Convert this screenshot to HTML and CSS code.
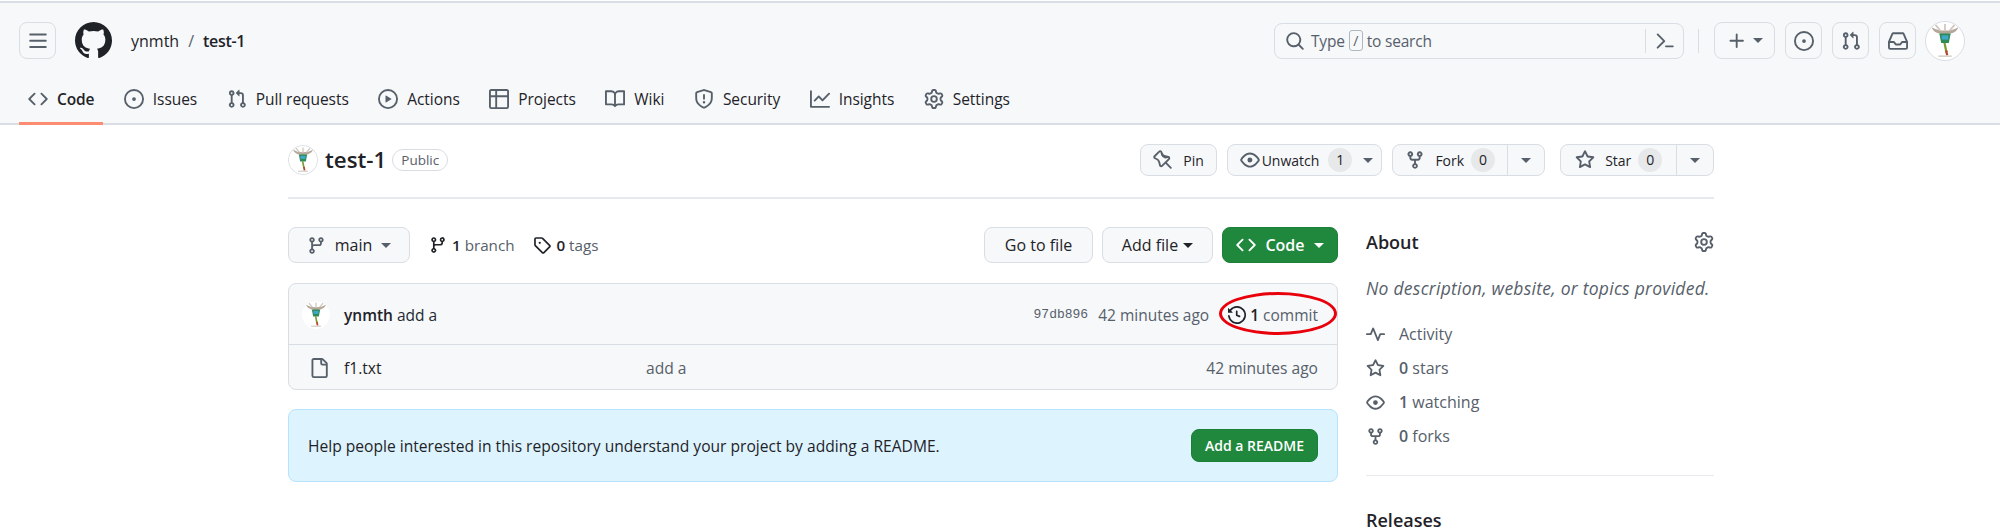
FILE: index.html
```html
<!DOCTYPE html>
<html lang="en">
<head>
<meta charset="utf-8">
<title>ynmth/test-1</title>
<link rel="stylesheet" href="styles.css">
</head>
<body>
<svg class="defs" aria-hidden="true">
<defs>
<symbol id="i-bars" viewBox="0 0 16 16"><path d="M1 2.75A.75.75 0 0 1 1.75 2h12.5a.75.75 0 0 1 0 1.5H1.75A.75.75 0 0 1 1 2.75Zm0 5A.75.75 0 0 1 1.75 7h12.5a.75.75 0 0 1 0 1.5H1.75A.75.75 0 0 1 1 7.75ZM1.75 12h12.5a.75.75 0 0 1 0 1.5H1.75a.75.75 0 0 1 0-1.5Z"/></symbol>
<symbol id="i-mark" viewBox="0 0 16 16"><path d="M8 0c4.42 0 8 3.58 8 8a8.013 8.013 0 0 1-5.45 7.59c-.4.08-.55-.17-.55-.38 0-.27.01-1.13.01-2.2 0-.75-.25-1.23-.54-1.48 1.78-.2 3.65-.88 3.65-3.95 0-.88-.31-1.59-.82-2.15.08-.2.36-1.02-.08-2.12 0 0-.67-.22-2.2.82-.64-.18-1.32-.27-2-.27-.68 0-1.36.09-2 .27-1.53-1.03-2.2-.82-2.2-.82-.44 1.1-.16 1.92-.08 2.12-.51.56-.82 1.28-.82 2.15 0 3.06 1.86 3.75 3.64 3.95-.23.2-.44.55-.51 1.07-.46.21-1.61.55-2.33-.66-.15-.24-.6-.83-1.23-.82-.67.01-.27.38.01.53.34.19.73.9.82 1.13.16.45.68 1.31 2.69.94 0 .67.01 1.3.01 1.49 0 .21-.15.45-.55.38A7.995 7.995 0 0 1 0 8c0-4.42 3.58-8 8-8Z"/></symbol>
<symbol id="i-code" viewBox="0 0 16 16"><path d="m11.28 3.22 4.25 4.25a.75.75 0 0 1 0 1.06l-4.25 4.25a.749.749 0 0 1-1.275-.326.749.749 0 0 1 .215-.734L13.94 8l-3.72-3.72a.749.749 0 0 1 .326-1.275.749.749 0 0 1 .734.215Zm-6.56 0a.751.751 0 0 1 1.042.018.751.751 0 0 1 .018 1.042L2.06 8l3.72 3.72a.749.749 0 0 1-.326 1.275.749.749 0 0 1-.734-.215L.47 8.53a.75.75 0 0 1 0-1.06Z"/></symbol>
<symbol id="i-issue" viewBox="0 0 16 16"><path d="M8 9.5a1.5 1.5 0 1 0 0-3 1.5 1.5 0 0 0 0 3Z"/><path d="M8 0a8 8 0 1 1 0 16A8 8 0 0 1 8 0ZM1.5 8a6.5 6.5 0 1 0 13 0 6.5 6.5 0 0 0-13 0Z"/></symbol>
<symbol id="i-pr" viewBox="0 0 16 16"><path d="M1.5 3.25a2.25 2.25 0 1 1 3 2.122v5.256a2.251 2.251 0 1 1-1.5 0V5.372A2.25 2.25 0 0 1 1.5 3.25Zm5.677-.177L9.573.677A.25.25 0 0 1 10 .854V2.5h1A2.5 2.5 0 0 1 13.5 5v5.628a2.251 2.251 0 1 1-1.5 0V5a1 1 0 0 0-1-1h-1v1.646a.25.25 0 0 1-.427.177L7.177 3.427a.25.25 0 0 1 0-.354ZM3.75 2.5a.75.75 0 1 0 0 1.5.75.75 0 0 0 0-1.5Zm0 9.5a.75.75 0 1 0 0 1.5.75.75 0 0 0 0-1.5Zm8.25.75a.75.75 0 1 0 1.5 0 .75.75 0 0 0-1.5 0Z"/></symbol>
<symbol id="i-play" viewBox="0 0 16 16"><path d="M8 0a8 8 0 1 1 0 16A8 8 0 0 1 8 0ZM1.5 8a6.5 6.5 0 1 0 13 0 6.5 6.5 0 0 0-13 0Zm4.879-2.773 4.264 2.559a.25.25 0 0 1 0 .428l-4.264 2.559A.25.25 0 0 1 6 10.559V5.442a.25.25 0 0 1 .379-.215Z"/></symbol>
<symbol id="i-table" viewBox="0 0 16 16"><path d="M0 1.75C0 .784.784 0 1.75 0h12.5C15.216 0 16 .784 16 1.75v12.5A1.75 1.75 0 0 1 14.25 16H1.75A1.75 1.75 0 0 1 0 14.25ZM6.5 6.5v8h7.75a.25.25 0 0 0 .25-.25V6.5Zm8-1.5V1.75a.25.25 0 0 0-.25-.25H6.5V5Zm-13 1.5v7.75c0 .138.112.25.25.25H5v-8ZM5 5V1.5H1.75a.25.25 0 0 0-.25.25V5Z"/></symbol>
<symbol id="i-book" viewBox="0 0 16 16"><path d="M0 1.75A.75.75 0 0 1 .75 1h4.253c1.227 0 2.317.59 3 1.501A3.743 3.743 0 0 1 11.006 1h4.245a.75.75 0 0 1 .75.75v10.5a.75.75 0 0 1-.75.75h-4.507a2.25 2.25 0 0 0-1.591.659l-.622.621a.75.75 0 0 1-1.06 0l-.622-.621A2.25 2.25 0 0 0 5.258 13H.75a.75.75 0 0 1-.75-.75Zm7.251 10.324.004-5.073-.002-2.253A2.25 2.25 0 0 0 5.003 2.5H1.5v9h3.757a3.75 3.75 0 0 1 1.994.574ZM8.755 4.75l-.004 7.322a3.752 3.752 0 0 1 1.992-.572H14.5v-9h-3.495a2.25 2.25 0 0 0-2.25 2.25Z"/></symbol>
<symbol id="i-shield" viewBox="0 0 16 16"><path d="M7.467.133a1.748 1.748 0 0 1 1.066 0l5.25 1.68A1.75 1.75 0 0 1 15 3.48V7c0 1.566-.32 3.182-1.303 4.682-.983 1.498-2.585 2.813-5.032 3.855a1.697 1.697 0 0 1-1.33 0c-2.447-1.042-4.049-2.357-5.032-3.855C1.32 10.182 1 8.566 1 7V3.48a1.75 1.75 0 0 1 1.217-1.667Zm.61 1.429a.25.25 0 0 0-.153 0l-5.25 1.68a.25.25 0 0 0-.174.238V7c0 1.358.275 2.666 1.057 3.86.784 1.194 2.121 2.34 4.366 3.297a.196.196 0 0 0 .154 0c2.245-.956 3.582-2.104 4.366-3.298C13.225 9.666 13.5 8.36 13.5 7V3.48a.251.251 0 0 0-.174-.237l-5.25-1.68ZM8.75 4.75v3a.75.75 0 0 1-1.5 0v-3a.75.75 0 0 1 1.5 0ZM9 10.5a1 1 0 1 1-2 0 1 1 0 0 1 2 0Z"/></symbol>
<symbol id="i-graph" viewBox="0 0 16 16"><path d="M1.5 1.75V13.5h13.75a.75.75 0 0 1 0 1.5H.75a.75.75 0 0 1-.75-.75V1.75a.75.75 0 0 1 1.5 0Zm14.28 2.53-5.25 5.25a.75.75 0 0 1-1.06 0L7 7.06 4.28 9.78a.751.751 0 0 1-1.042-.018.751.751 0 0 1-.018-1.042l3.25-3.25a.75.75 0 0 1 1.06 0L10 7.94l4.72-4.72a.751.751 0 0 1 1.042.018.751.751 0 0 1 .018 1.042Z"/></symbol>
<symbol id="i-gear" viewBox="0 0 16 16"><path d="M8 0a8.2 8.2 0 0 1 .701.031C9.444.095 9.99.645 10.16 1.29l.288 1.107c.018.066.079.158.212.224.231.114.454.243.668.386.123.082.233.09.299.071l1.103-.303c.644-.176 1.392.021 1.82.63.27.385.506.792.704 1.218.315.675.111 1.422-.364 1.891l-.814.806c-.049.048-.098.147-.088.294.016.257.016.515 0 .772-.01.147.038.246.088.294l.814.806c.475.469.679 1.216.364 1.891a7.977 7.977 0 0 1-.704 1.217c-.428.61-1.176.807-1.82.63l-1.102-.302c-.067-.019-.177-.011-.3.071a5.909 5.909 0 0 1-.668.386c-.133.066-.194.158-.211.224l-.29 1.106c-.168.646-.715 1.196-1.458 1.26a8.006 8.006 0 0 1-1.402 0c-.743-.064-1.289-.614-1.458-1.26l-.289-1.106c-.018-.066-.079-.158-.212-.224a5.738 5.738 0 0 1-.668-.386c-.123-.082-.233-.09-.299-.071l-1.103.303c-.644.176-1.392-.021-1.82-.63a8.12 8.12 0 0 1-.704-1.218c-.315-.675-.111-1.422.363-1.891l.815-.806c.05-.048.098-.147.088-.294a6.214 6.214 0 0 1 0-.772c.01-.147-.038-.246-.088-.294l-.815-.806C.635 6.045.431 5.298.746 4.623a7.92 7.92 0 0 1 .704-1.217c.428-.61 1.176-.807 1.82-.63l1.102.302c.067.019.177.011.3-.071.214-.143.437-.272.668-.386.133-.066.194-.158.211-.224l.29-1.106C6.009.645 6.556.095 7.299.03 7.53.01 7.764 0 8 0Zm-.571 1.525c-.036.003-.108.036-.137.146l-.289 1.105c-.147.561-.549.967-.998 1.189-.173.086-.34.183-.5.29-.417.278-.97.423-1.529.27l-1.103-.303c-.109-.03-.175.016-.195.045-.22.312-.412.644-.573.99-.014.031-.021.11.059.19l.815.806c.411.406.562.957.53 1.456a4.709 4.709 0 0 0 0 .582c.032.499-.119 1.05-.53 1.456l-.815.806c-.081.08-.073.159-.059.19.162.346.353.677.573.989.02.03.085.076.195.046l1.102-.303c.56-.153 1.113-.008 1.53.27.161.107.328.204.501.29.447.222.85.629.997 1.189l.289 1.105c.029.109.101.143.137.146a6.6 6.6 0 0 0 1.142 0c.036-.003.108-.036.137-.146l.289-1.105c.147-.561.549-.967.998-1.189.173-.086.34-.183.5-.29.417-.278.97-.423 1.529-.27l1.103.303c.109.029.175-.016.195-.045.22-.313.411-.644.573-.99.014-.031.021-.11-.059-.19l-.815-.806c-.411-.406-.562-.957-.53-1.456a4.709 4.709 0 0 0 0-.582c-.032-.499.119-1.05.53-1.456l.815-.806c.081-.08.073-.159.059-.19a6.464 6.464 0 0 0-.573-.989c-.02-.03-.085-.076-.195-.046l-1.102.303c-.56.153-1.113.008-1.53-.27a4.44 4.44 0 0 0-.501-.29c-.447-.222-.85-.629-.997-1.189l-.289-1.105c-.029-.11-.101-.143-.137-.146a6.6 6.6 0 0 0-1.142 0ZM11 8a3 3 0 1 1-6 0 3 3 0 0 1 6 0ZM9.5 8a1.5 1.5 0 1 0-3.001.001A1.5 1.5 0 0 0 9.5 8Z"/></symbol>
<symbol id="i-search" viewBox="0 0 16 16"><path d="M10.68 11.74a6 6 0 0 1-7.922-8.982 6 6 0 0 1 8.982 7.922l3.04 3.04a.749.749 0 0 1-.326 1.275.749.749 0 0 1-.734-.215ZM11.5 7a4.499 4.499 0 1 0-8.997 0A4.499 4.499 0 0 0 11.5 7Z"/></symbol>
<symbol id="i-palette" viewBox="0 0 16 16"><path d="m6.354 8.04-4.773 4.773a.75.75 0 1 0 1.061 1.06L7.945 8.57a.75.75 0 0 0 0-1.06L2.642 2.206a.75.75 0 0 0-1.06 1.061L6.353 8.04ZM8.75 11.5a.75.75 0 0 0 0 1.5h5.5a.75.75 0 0 0 0-1.5h-5.5Z"/></symbol>
<symbol id="i-plus" viewBox="0 0 16 16"><path d="M7.75 2a.75.75 0 0 1 .75.75V7h4.25a.75.75 0 0 1 0 1.5H8.5v4.25a.75.75 0 0 1-1.5 0V8.5H2.75a.75.75 0 0 1 0-1.5H7V2.75A.75.75 0 0 1 7.75 2Z"/></symbol>
<symbol id="i-inbox" viewBox="0 0 16 16"><path d="M2.8 2.06A1.75 1.75 0 0 1 4.41 1h7.18c.7 0 1.333.417 1.61 1.06l2.74 6.395c.04.093.06.194.06.295v4.5A1.75 1.75 0 0 1 14.25 15H1.75A1.75 1.75 0 0 1 0 13.25v-4.5c0-.101.02-.202.06-.295Zm1.61.44a.25.25 0 0 0-.23.152L1.887 8H4.75a.75.75 0 0 1 .6.3L6.625 10h2.75l1.275-1.7a.75.75 0 0 1 .6-.3h2.863L11.82 2.652a.25.25 0 0 0-.23-.152Zm10.09 7h-2.875l-1.275 1.7a.75.75 0 0 1-.6.3h-3.5a.75.75 0 0 1-.6-.3L4.375 9.5H1.5v3.75c0 .138.112.25.25.25h12.5a.25.25 0 0 0 .25-.25Z"/></symbol>
<symbol id="i-pin" viewBox="0 0 16 16"><path d="M4.456.734a1.75 1.75 0 0 1 2.826.504l.613 1.327a3.08 3.08 0 0 0 2.084 1.707l2.454.584c1.332.317 1.8 1.972.832 2.94L11.06 10l3.72 3.72a.748.748 0 0 1-.332 1.265.75.75 0 0 1-.729-.205L10 11.06l-2.204 2.205c-.968.968-2.623.5-2.94-.832l-.584-2.454a3.08 3.08 0 0 0-1.707-2.084l-1.327-.613a1.75 1.75 0 0 1-.504-2.826L4.456.734ZM5.92 1.866a.25.25 0 0 0-.404-.072L1.794 5.516a.25.25 0 0 0 .072.404l1.328.613A4.582 4.582 0 0 1 5.73 9.63l.584 2.454a.25.25 0 0 0 .42.12l5.47-5.47a.25.25 0 0 0-.12-.42L9.63 6.73a4.58 4.58 0 0 1-3.098-2.537L5.92 1.866Z"/></symbol>
<symbol id="i-eye" viewBox="0 0 16 16"><path d="M8 2c1.981 0 3.671.992 4.933 2.078 1.27 1.091 2.187 2.345 2.637 3.023a1.62 1.62 0 0 1 0 1.798c-.45.678-1.367 1.932-2.637 3.023C11.67 13.008 9.981 14 8 14c-1.981 0-3.671-.992-4.933-2.078C1.797 10.83.88 9.576.43 8.898a1.62 1.62 0 0 1 0-1.798c.45-.677 1.367-1.931 2.637-3.022C4.33 2.992 6.019 2 8 2ZM1.679 7.932a.12.12 0 0 0 0 .136c.411.622 1.241 1.75 2.366 2.717C5.176 11.758 6.527 12.5 8 12.5c1.473 0 2.825-.742 3.955-1.715 1.124-.967 1.954-2.096 2.366-2.717a.12.12 0 0 0 0-.136c-.412-.621-1.242-1.75-2.366-2.717C10.824 4.242 9.473 3.5 8 3.5c-1.473 0-2.825.742-3.955 1.715-1.124.967-1.954 2.096-2.366 2.717ZM8 10a2 2 0 1 1-.001-3.999A2 2 0 0 1 8 10Z"/></symbol>
<symbol id="i-fork" viewBox="0 0 16 16"><path d="M5 5.372v.878c0 .414.336.75.75.75h4.5a.75.75 0 0 0 .75-.75v-.878a2.25 2.25 0 1 1 1.5 0v.878a2.25 2.25 0 0 1-2.25 2.25h-1.5v2.128a2.251 2.251 0 1 1-1.5 0V8.5h-1.5A2.25 2.25 0 0 1 3.5 6.25v-.878a2.25 2.25 0 1 1 1.5 0ZM5 3.25a.75.75 0 1 0-1.5 0 .75.75 0 0 0 1.5 0Zm6.75.75a.75.75 0 1 0 0-1.5.75.75 0 0 0 0 1.5Zm-3 8.75a.75.75 0 1 0-1.5 0 .75.75 0 0 0 1.5 0Z"/></symbol>
<symbol id="i-star" viewBox="0 0 16 16"><path d="M8 .25a.75.75 0 0 1 .673.418l1.882 3.815 4.21.612a.75.75 0 0 1 .416 1.279l-3.046 2.97.719 4.192a.751.751 0 0 1-1.088.791L8 12.347l-3.766 1.98a.75.75 0 0 1-1.088-.79l.72-4.194L.818 6.374a.75.75 0 0 1 .416-1.28l4.21-.611L7.327.668A.75.75 0 0 1 8 .25Zm0 2.445L6.615 5.5a.75.75 0 0 1-.564.41l-3.097.45 2.24 2.184a.75.75 0 0 1 .216.664l-.528 3.084 2.769-1.456a.75.75 0 0 1 .698 0l2.77 1.456-.53-3.084a.75.75 0 0 1 .216-.664l2.24-2.183-3.096-.45a.75.75 0 0 1-.564-.41L8 2.694Z"/></symbol>
<symbol id="i-branch" viewBox="0 0 16 16"><path d="M9.5 3.25a2.25 2.25 0 1 1 3 2.122V6A2.5 2.5 0 0 1 10 8.5H6a1 1 0 0 0-1 1v1.128a2.251 2.251 0 1 1-1.5 0V5.372a2.25 2.25 0 1 1 1.5 0v1.836A2.493 2.493 0 0 1 6 7h4a1 1 0 0 0 1-1v-.628A2.25 2.25 0 0 1 9.5 3.25Zm-6 0a.75.75 0 1 0 1.5 0 .75.75 0 0 0-1.5 0Zm8.25-.75a.75.75 0 1 0 0 1.5.75.75 0 0 0 0-1.5ZM4.25 12a.75.75 0 1 0 0 1.5.75.75 0 0 0 0-1.5Z"/></symbol>
<symbol id="i-tag" viewBox="0 0 16 16"><path d="M1 7.775V2.75C1 1.784 1.784 1 2.75 1h5.025c.464 0 .91.184 1.238.513l6.25 6.25a1.75 1.75 0 0 1 0 2.474l-5.026 5.026a1.75 1.75 0 0 1-2.474 0l-6.25-6.25A1.752 1.752 0 0 1 1 7.775Zm1.5 0c0 .066.026.13.073.177l6.25 6.25a.25.25 0 0 0 .354 0l5.025-5.025a.25.25 0 0 0 0-.354l-6.25-6.25a.25.25 0 0 0-.177-.073H2.75a.25.25 0 0 0-.25.25ZM6 5a1 1 0 1 1 0 2 1 1 0 0 1 0-2Z"/></symbol>
<symbol id="i-history" viewBox="0 0 16 16"><path d="m.427 1.927 1.215 1.215a8.002 8.002 0 1 1-1.6 5.685.75.75 0 1 1 1.493-.154 6.5 6.5 0 1 0 1.18-4.458l1.358 1.358A.25.25 0 0 1 3.896 6H.25A.25.25 0 0 1 0 5.75V2.104a.25.25 0 0 1 .427-.177ZM7.75 4a.75.75 0 0 1 .75.75v2.992l2.028.812a.75.75 0 0 1-.557 1.392l-2.5-1A.751.751 0 0 1 7 8.25v-3.5A.75.75 0 0 1 7.75 4Z"/></symbol>
<symbol id="i-file" viewBox="0 0 16 16"><path d="M2 1.75C2 .784 2.784 0 3.75 0h6.586c.464 0 .909.184 1.237.513l2.914 2.914c.329.328.513.773.513 1.237v9.586A1.75 1.75 0 0 1 13.25 16h-9.5A1.75 1.75 0 0 1 2 14.25Zm1.75-.25a.25.25 0 0 0-.25.25v12.5c0 .138.112.25.25.25h9.5a.25.25 0 0 0 .25-.25V6h-2.75A1.75 1.75 0 0 1 9 4.25V1.5Zm6.75.062V4.25c0 .138.112.25.25.25h2.688l-.011-.013-2.914-2.914-.013-.011Z"/></symbol>
<symbol id="i-pulse" viewBox="0 0 16 16"><path d="M6 2c.306 0 .582.187.696.471L10 10.731l1.304-3.26A.751.751 0 0 1 12 7h3.25a.75.75 0 0 1 0 1.5h-2.742l-1.812 4.528a.751.751 0 0 1-1.392 0L6 4.77 4.696 8.03A.75.75 0 0 1 4 8.5H.75a.75.75 0 0 1 0-1.5h2.742l1.812-4.529A.751.751 0 0 1 6 2Z"/></symbol>
<symbol id="i-avatar" viewBox="0 0 40 40">
<circle cx="20" cy="20" r="20" fill="#fff"/>
<path d="M6 5.500c4 2.500 8 3.500 14 3.500s10-1 14-3.500c-1 4.500-7 7.500-14 7.500s-13-3-14-7.500Z" fill="#b5a89b"/>
<path d="M10 3l5 6M20 2v7M30 3l-5 6" stroke="#cfc6bd" stroke-width="1.800" fill="none"/>
<path d="M14 12h12l-2 10h-8Z" fill="#2e8b57"/>
<rect x="16.500" y="14" width="7" height="4.500" fill="#3fa7c9"/>
<path d="M19.500 22l2 10" stroke="#7b9b3a" stroke-width="2.400" fill="none"/>
<path d="M21.300 30l1 5" stroke="#b5482f" stroke-width="2.400" fill="none"/>
<path d="M13 36h14" stroke="#c9c4bb" stroke-width="1.400" fill="none"/>
</symbol>
</defs>
</svg>

<header class="site-header">
  <div class="top-row">
    <button class="btn-square menu-btn"><svg class="ic"><use href="#i-bars"/></svg></button>
    <svg class="logo"><use href="#i-mark"/></svg>
    <nav class="crumbs"><span class="crumb-owner">ynmth</span><span class="crumb-sep">/</span><span class="crumb-repo">test-1</span></nav>
    <div class="top-right">
      <div class="search">
        <svg class="ic"><use href="#i-search"/></svg>
        <span class="search-text">Type <kbd class="slash">/</kbd> to search</span>
        <span class="search-div"></span>
        <svg class="ic palette"><use href="#i-palette"/></svg>
      </div>
      <span class="top-div"></span>
      <button class="btn-square plus-btn"><svg class="ic"><use href="#i-plus"/></svg><span class="caret"></span></button>
      <button class="btn-square round-btn"><svg class="ic"><use href="#i-issue"/></svg></button>
      <button class="btn-square round-btn"><svg class="ic"><use href="#i-pr"/></svg></button>
      <button class="btn-square round-btn"><svg class="ic"><use href="#i-inbox"/></svg></button>
      <svg class="avatar avatar-top"><use href="#i-avatar"/></svg>
    </div>
  </div>
  <nav class="tabs">
    <a class="tab tab-active"><svg class="ic"><use href="#i-code"/></svg>Code</a>
    <a class="tab"><svg class="ic"><use href="#i-issue"/></svg>Issues</a>
    <a class="tab"><svg class="ic"><use href="#i-pr"/></svg>Pull requests</a>
    <a class="tab"><svg class="ic"><use href="#i-play"/></svg>Actions</a>
    <a class="tab"><svg class="ic"><use href="#i-table"/></svg>Projects</a>
    <a class="tab"><svg class="ic"><use href="#i-book"/></svg>Wiki</a>
    <a class="tab"><svg class="ic"><use href="#i-shield"/></svg>Security</a>
    <a class="tab"><svg class="ic"><use href="#i-graph"/></svg>Insights</a>
    <a class="tab"><svg class="ic"><use href="#i-gear"/></svg>Settings</a>
  </nav>
</header>

<main class="container">
  <section class="repo-head">
    <svg class="avatar avatar-repo"><use href="#i-avatar"/></svg>
    <h1 class="repo-name">test-1</h1>
    <span class="badge">Public</span>
    <div class="repo-actions">
      <button class="btn btn-pin"><svg class="ic"><use href="#i-pin"/></svg>Pin</button>
      <button class="btn btn-watch"><svg class="ic"><use href="#i-eye"/></svg>Unwatch<span class="count">1</span><span class="caret"></span></button>
      <div class="split split-fork">
        <button class="btn split-main"><svg class="ic"><use href="#i-fork"/></svg>Fork<span class="count">0</span></button>
        <button class="btn split-drop"><span class="caret"></span></button>
      </div>
      <div class="split split-star">
        <button class="btn split-main"><svg class="ic"><use href="#i-star"/></svg>Star<span class="count">0</span></button>
        <button class="btn split-drop"><span class="caret"></span></button>
      </div>
    </div>
  </section>

  <div class="columns">
    <div class="col-main">
      <div class="toolbar">
        <button class="btn btn-branch"><svg class="ic"><use href="#i-branch"/></svg><span>main</span><span class="caret"></span></button>
        <a class="meta meta-branch"><svg class="ic"><use href="#i-branch"/></svg><span><b>1</b> branch</span></a>
        <a class="meta meta-tags"><svg class="ic"><use href="#i-tag"/></svg><span><b>0</b> tags</span></a>
        <div class="toolbar-right">
          <button class="btn btn-goto">Go to file</button>
          <button class="btn btn-add">Add file<span class="caret"></span></button>
          <button class="btn btn-green btn-code"><svg class="ic"><use href="#i-code"/></svg>Code<span class="caret"></span></button>
        </div>
      </div>

      <div class="files">
        <div class="commit-row">
          <svg class="avatar avatar-commit"><use href="#i-avatar"/></svg>
          <span class="commit-msg"><b>ynmth</b> add a</span>
          <span class="sha">97db896</span>
          <span class="muted commit-age">42 minutes ago</span>
          <span class="history"><svg class="ic"><use href="#i-history"/></svg><span><b>1</b> <i>commit</i></span></span>
          <span class="annotation"></span>
        </div>
        <div class="file-row">
          <svg class="ic file-ic"><use href="#i-file"/></svg>
          <span class="file-name">f1.txt</span>
          <span class="muted file-msg">add a</span>
          <span class="muted file-age">42 minutes ago</span>
        </div>
      </div>

      <div class="flash">
        <span>Help people interested in this repository understand your project by adding a README.</span>
        <button class="btn btn-green btn-readme">Add a README</button>
      </div>
    </div>

    <aside class="sidebar">
      <div class="about-head"><h2 class="side-title">About</h2><svg class="ic"><use href="#i-gear"/></svg></div>
      <p class="desc">No description, website, or topics provided.</p>
      <ul class="side-list">
        <li><svg class="ic"><use href="#i-pulse"/></svg>Activity</li>
        <li><svg class="ic"><use href="#i-star"/></svg><span><b>0</b> stars</span></li>
        <li><svg class="ic"><use href="#i-eye"/></svg><span><b>1</b> watching</span></li>
        <li><svg class="ic"><use href="#i-fork"/></svg><span><b>0</b> forks</span></li>
      </ul>
      <hr class="side-rule">
      <h2 class="side-title releases">Releases</h2>
    </aside>
  </div>
</main>
</body>
</html>
```
FILE: styles.css
```css
* { box-sizing: border-box; }
html, body { margin: 0; height: 532px; overflow: hidden; background: #fff; }
body { font-family: "Open Sans", "Noto Sans", sans-serif; font-size: 16px; color: #1f2328; }
.defs { position: absolute; width: 0; height: 0; }
button { font: inherit; color: inherit; cursor: pointer; }
.ic { width: 20px; height: 20px; fill: currentColor; flex: none; display: block; }
b { font-weight: 600; }
.caret { width: 0; height: 0; flex: none; border: 5px solid transparent; border-top-color: currentColor; border-bottom: 0; }

.site-header { margin-top: 1px; height: 124px; background: #f6f8fa; border-top: 2px solid #d8dee4; border-bottom: 2px solid #d8dee4; }
.top-row { display: flex; align-items: center; padding: 19px 35px 0 19px; height: 56px; }
.btn-square { display: flex; align-items: center; justify-content: center; height: 37px; padding: 0; background: transparent; border: 1.5px solid #d8dee4; border-radius: 8px; color: #57606a; }
.menu-btn { width: 37px; }
.logo { width: 37px; height: 37px; margin-left: 19px; fill: #1f2328; }
.crumbs { display: flex; align-items: center; margin-left: 19px; font-size: 16px; }
.crumb-owner { color: #1f2328; }
.crumb-sep { color: #57606a; margin: 0 9px; }
.crumb-repo { font-weight: 600; letter-spacing: -.3px; }
.top-right { margin-left: auto; display: flex; align-items: center; }
.search { width: 410px; height: 36px; display: flex; align-items: center; padding: 0 8px 0 10px; border: 1.5px solid #d8dee4; border-radius: 8px; color: #57606a; }
.search-text { margin-left: 6px; font-size: 15.5px; letter-spacing: -.2px; display: flex; align-items: center; gap: 4px; }
.slash { display: inline-flex; width: 14px; height: 21px; justify-content: center; align-items: center; border: 1px solid #afb8c1; border-radius: 3px; font: inherit; font-size: 14px; }
.search-div { margin-left: auto; width: 1px; height: 24px; background: #d8dee4; }
.palette { margin-left: 9px; }
.top-div { width: 1px; height: 24px; background: #d8dee4; margin: 0 15px 0 14px; }
.plus-btn { width: 61px; gap: 6px; }
.round-btn { width: 37px; margin-left: 10px; }
.avatar { display: block; flex: none; border-radius: 50%; }
.avatar-top { width: 40px; height: 40px; margin-left: 9px; border: 1.5px solid #d8dee4; }

.tabs { display: flex; height: 66px; padding: 0 0 0 19px; gap: 11.5px; }
.tab { display: flex; align-items: center; gap: 9px; height: 66px; padding: 17px 9px 0; font-size: 15.5px; letter-spacing: -.05px; color: #1f2328; border-bottom: 3px solid transparent; }
.tab .ic { color: #57606a; }
.tab-active { font-weight: 600; letter-spacing: -.15px; border-bottom-color: #fd8c73; }

.container { width: 1426px; margin-left: 288px; }
.repo-head { display: flex; align-items: center; height: 74px; padding-bottom: 21px; padding-top: 19px; border-bottom: 2px solid #e6eaef; }
.avatar-repo { width: 30px; height: 30px; border: 1px solid #d8dee4; }
.repo-name { margin: 0 0 0 7px; font-size: 22.3px; font-weight: 600; line-height: 32px; }
.badge { margin-left: 6px; padding: 0 8px; height: 22px; line-height: 20px; font-size: 13.5px; font-weight: 500; color: #57606a; border: 1.5px solid #d8dee4; border-radius: 12px; }
.repo-actions { margin-left: auto; display: flex; gap: 10px; }
.btn { display: flex; align-items: center; justify-content: center; height: 32px; padding: 0; font-size: 14px; font-weight: 500; background: #f6f8fa; border: 1.5px solid #d8dee4; border-radius: 8px; color: #1f2328; white-space: nowrap; }
.repo-actions .ic { color: #57606a; }
.repo-actions .caret { color: #57606a; }
.count { display: inline-block; width: 24px; height: 24px; line-height: 24px; text-align: center; border-radius: 12px; background: #e6e8ea; font-size: 14px; margin-left: 7px; }
.btn-pin { width: 77px; gap: 10px; }
.btn-watch { width: 155px; gap: 2px; padding-left: 4px; }
.btn-watch .caret { margin-left: 9px; }
.split { display: flex; }
.split-fork { width: 153px; }
.split-star { width: 154px; margin-left: 5px; }
.split-main { flex: 1; border-radius: 8px 0 0 8px; gap: 10px; }
.split-main .count { margin-left: -3px; }
.split-drop { width: 38px; margin-left: -1.5px; border-radius: 0 8px 8px 0; }

.columns { display: flex; padding-top: 28px; }
.col-main { width: 1051px; }
.toolbar { display: flex; align-items: center; height: 36px; }
.toolbar .btn { height: 36px; font-size: 16px; }
.btn-branch { width: 122px; gap: 9px; }
.btn-branch .ic { width: 19px; height: 19px; color: #57606a; }
.btn-branch span:nth-of-type(1) { font-weight: 500; }
.btn-branch .caret { color: #57606a; }
.meta { display: flex; align-items: center; gap: 5px; color: #57606a; font-size: 15.2px; }
.meta b { color: #1f2328; }
.meta .ic { color: #1f2328; width: 18px; height: 18px; }
.meta-branch { margin-left: 19px; }
.meta-tags { margin-left: 19px; }
.toolbar-right { margin-left: auto; display: flex; gap: 9px; margin-right: 1px; }
.btn-goto { width: 109px; }
.btn-add { width: 111px; gap: 5px; }
.btn-green { background: #1f883d; border-color: #1a7f37; color: #fff; font-weight: 600; }
.btn-code { width: 116px; gap: 9px; }

.files { margin-top: 20px; width: 1050px; height: 107px; border: 1.5px solid #d8dee4; border-radius: 8px; background: #f6f8fa; }
.commit-row { position: relative; display: flex; align-items: center; height: 61px; padding: 1px 19px 0 13px; border-bottom: 1.5px solid #d8dee4; font-size: 15.5px; }
.avatar-commit { width: 28px; height: 28px; }
.commit-msg { margin-left: 14px; color: #24292f; }
.commit-msg b { color: #1f2328; }
.sha { margin-left: auto; font-family: "Liberation Mono", monospace; font-size: 13px; color: #57606a; }
.muted { color: #57606a; }
.commit-age { margin-left: 10px; }
.history { margin-left: 19px; display: flex; align-items: center; gap: 4px; color: #57606a; }
.history .ic { color: #1f2328; width: 18px; height: 18px; }
.history b { color: #1f2328; }
.history i { font-style: normal; }
.annotation { position: absolute; left: 930px; top: 8px; width: 118px; height: 43px; border: 3px solid #e8000b; border-radius: 50%; }
.file-row { display: flex; align-items: center; height: 44px; padding: 2px 19px 0 20px; font-size: 15.6px; }
.file-ic { color: #57606a; }
.file-name { margin-left: 15px; width: 302px; }
.file-age { margin-left: auto; }

.flash { display: flex; align-items: center; justify-content: space-between; margin-top: 19px; width: 1050px; height: 73px; padding: 0 19px; background: #ddf4ff; border: 1.5px solid #b6e3ff; border-radius: 8px; font-size: 15.6px; color: #1f2328; }
.btn-readme { width: 127px; height: 33px; font-size: 14px; }

.sidebar { width: 348px; margin-left: 27px; }
.about-head { display: flex; justify-content: space-between; align-items: center; height: 30px; color: #57606a; }
.side-title { margin: 0; font-size: 18px; font-weight: 600; color: #1f2328; }
.desc { margin: 19px 0 0; font-style: italic; font-size: 17.5px; letter-spacing: .26px; color: #57606a; white-space: nowrap; }
.side-list { list-style: none; margin: 17px 0 0; padding: 0; color: #57606a; font-size: 16px; }
.side-list li { display: flex; align-items: center; gap: 14px; height: 34px; }
.side-list .ic { width: 19px; height: 19px; }
.side-rule { margin: 22px 0 0; border: 0; border-top: 1.5px solid #e6eaef; }
.releases { margin-top: 32px; }
```
